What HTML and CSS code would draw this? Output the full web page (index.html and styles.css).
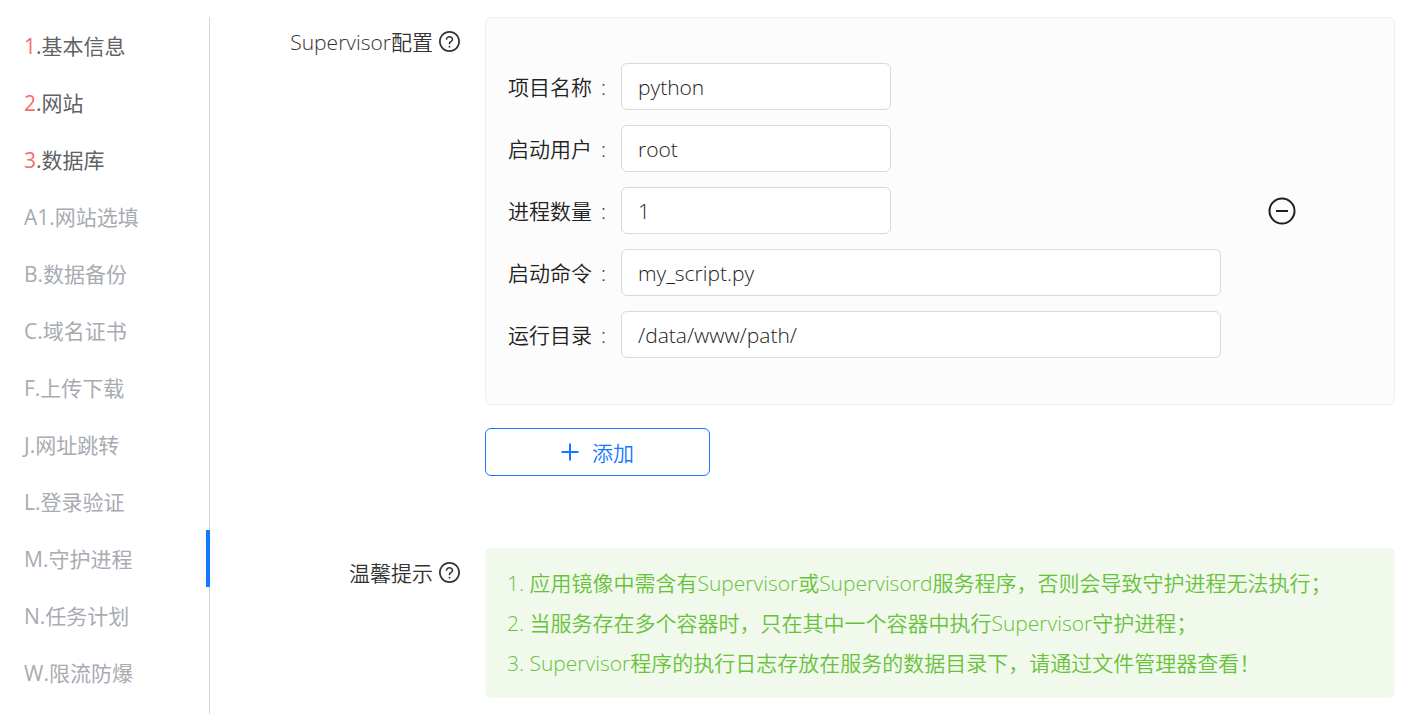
FILE: index.html
```html
<!DOCTYPE html>
<html lang="zh-CN">
<head>
<meta charset="utf-8">
<meta name="viewport" content="width=device-width, initial-scale=1">
<title>守护进程</title>
<link rel="stylesheet" href="styles.css">
</head>
<body>
<svg class="sprite" aria-hidden="true">
  <symbol id="icon-help" viewBox="64 64 896 896">
    <path d="M512 64C264.600 64 64 264.600 64 512s200.600 448 448 448 448-200.600 448-448S759.400 64 512 64zm0 820c-205.400 0-372-166.600-372-372s166.600-372 372-372 372 166.600 372 372-166.600 372-372 372z"/>
    <path d="M623.600 316.700C593.600 290.400 554 276 512 276s-81.600 14.500-111.600 40.700C369.200 344 352 380.700 352 420v7.600c0 4.400 3.600 8 8 8h48c4.400 0 8-3.600 8-8V420c0-44.100 43.100-80 96-80s96 35.900 96 80c0 31.100-22 59.600-56.100 72.700-21.200 8.100-39.200 22.300-52.100 40.900-13.100 19-19.900 41.800-19.900 64.900V620c0 4.400 3.600 8 8 8h48c4.400 0 8-3.600 8-8v-22.700a48.300 48.300 0 0 1 30.900-44.800c59-22.700 97.100-74.700 97.100-132.500 0-39.300-17.200-76-48.300-103.300zM472 732a40 40 0 1 0 80 0 40 40 0 1 0-80 0z"/>
  </symbol>
</svg>
<div class="page">
  <nav class="steps" aria-label="配置步骤">
    <a class="step step-required" href="#"><span class="step-no">1</span>.基本信息</a>
    <a class="step step-required" href="#"><span class="step-no">2</span>.网站</a>
    <a class="step step-required" href="#"><span class="step-no">3</span>.数据库</a>
    <a class="step" href="#">A1.网站选填</a>
    <a class="step" href="#">B.数据备份</a>
    <a class="step" href="#">C.域名证书</a>
    <a class="step" href="#">F.上传下载</a>
    <a class="step" href="#">J.网址跳转</a>
    <a class="step" href="#">L.登录验证</a>
    <a class="step step-active" href="#" aria-current="step">M.守护进程</a>
    <a class="step" href="#">N.任务计划</a>
    <a class="step" href="#">W.限流防爆</a>
  </nav>
  <main class="form">
    <section class="form-row">
      <div class="form-label">Supervisor配置<svg class="icon-help" aria-hidden="true"><use href="#icon-help"/></svg></div>
      <div class="form-content">
        <div class="card">
          <div class="fields">
            <div class="field"><label class="field-label" for="name">项目名称<span class="colon">:</span></label><input class="input input-short" id="name" type="text" value="python"></div>
            <div class="field"><label class="field-label" for="user">启动用户<span class="colon">:</span></label><input class="input input-short" id="user" type="text" value="root"></div>
            <div class="field"><label class="field-label" for="count">进程数量<span class="colon">:</span></label><input class="input input-short" id="count" type="text" value="1"></div>
            <div class="field"><label class="field-label" for="command">启动命令<span class="colon">:</span></label><input class="input" id="command" type="text" value="my_script.py"></div>
            <div class="field"><label class="field-label" for="dir">运行目录<span class="colon">:</span></label><input class="input" id="dir" type="text" value="/data/www/path/"></div>
          </div>
          <button class="remove" type="button" aria-label="删除">
            <svg class="icon-remove" viewBox="0 0 28 28" aria-hidden="true"><circle cx="14" cy="14" r="12.500"/><path d="M8 14h12"/></svg>
          </button>
        </div>
        <button class="add" type="button"><svg class="icon-plus" viewBox="0 0 18 18" aria-hidden="true"><path d="M9 0.500v17M0.500 9h17"/></svg>添加</button>
      </div>
    </section>
    <section class="form-row">
      <div class="form-label">温馨提示<svg class="icon-help" aria-hidden="true"><use href="#icon-help"/></svg></div>
      <div class="form-content tips">
        <p class="tip">1. 应用镜像中需含有Supervisor或Supervisord服务程序，否则会导致守护进程无法执行；</p>
        <p class="tip">2. 当服务存在多个容器时，只在其中一个容器中执行Supervisor守护进程；</p>
        <p class="tip">3. Supervisor程序的执行日志存放在服务的数据目录下，请通过文件管理器查看！</p>
      </div>
    </section>
  </main>
</div>
</body>
</html>
```
FILE: styles.css
```css
* {
  box-sizing: border-box;
}

body {
  margin: 0;
  background: #fff;
  color: #222;
  font-family: "Open Sans", "Noto Sans CJK SC", sans-serif;
  font-size: 21px;
  font-weight: 350;
}

.sprite {
  display: none;
}

.page {
  display: flex;
  min-height: 100vh;
  padding-top: 17px;
}

.steps {
  flex: 0 0 210px;
  border-right: 1px solid #d4d4d6;
}

.step {
  display: block;
  margin-right: -1px;
  padding-top: 2px;
  padding-left: 24px;
  border-right: 4px solid transparent;
  color: #a8abb2;
  font-weight: 400;
  line-height: 55px;
  text-decoration: none;
}

.step-required {
  color: #606266;
}

.step-no {
  color: #f56c6c;
}

.step-active {
  border-right-color: #1677ff;
}

.form {
  display: flex;
  flex: 1;
  flex-direction: column;
  gap: 72px;
  min-width: 0;
  padding-right: 24px;
}

.form-row {
  display: grid;
  grid-template-columns: 250px minmax(0, 1fr);
  column-gap: 25px;
}

.form-label {
  display: flex;
  align-items: center;
  justify-content: flex-end;
  gap: 6px;
  height: 48px;
  color: #333;
}

.icon-help {
  width: 21px;
  height: 21px;
  fill: currentColor;
}

.card {
  display: flex;
  align-items: center;
  gap: 47px;
  margin-bottom: 23px;
  padding: 45px 98px 46px 22px;
  border: 1px solid #ebeef5;
  border-radius: 6px;
  background: #fcfcfc;
}

.fields {
  display: flex;
  flex: 1;
  flex-direction: column;
  gap: 15px;
}

.field {
  display: grid;
  grid-template-columns: 113px minmax(0, 1fr);
  align-items: center;
}

.field-label {
  padding-bottom: 2px;
}

.colon {
  margin-left: 9px;
}

.input {
  width: 100%;
  height: 47px;
  padding: 0 16px;
  border: 1px solid #d9d9d9;
  border-radius: 6px;
  background: #fff;
  color: #222;
  font: inherit;
}

.input-short {
  max-width: 270px;
}

.remove {
  display: flex;
  padding: 0;
  border: 0;
  background: none;
  color: #1f1f1f;
}

.icon-remove {
  width: 28px;
  height: 28px;
  fill: none;
  stroke: currentColor;
  stroke-width: 2;
}

.add {
  display: flex;
  align-items: center;
  justify-content: center;
  gap: 13px;
  width: 225px;
  height: 48px;
  padding-bottom: 2px;
  border: 1px solid #1677ff;
  border-radius: 6px;
  background: #fff;
  color: #1677ff;
  font: inherit;
}

.icon-plus {
  width: 18px;
  height: 18px;
  fill: none;
  stroke: currentColor;
  stroke-width: 2;
}

.tips {
  padding: 15px 22px;
  border-radius: 6px;
  background: #f0f9eb;
  color: #67c23a;
}

.tip {
  margin: 0;
  line-height: 40px;
}
```
